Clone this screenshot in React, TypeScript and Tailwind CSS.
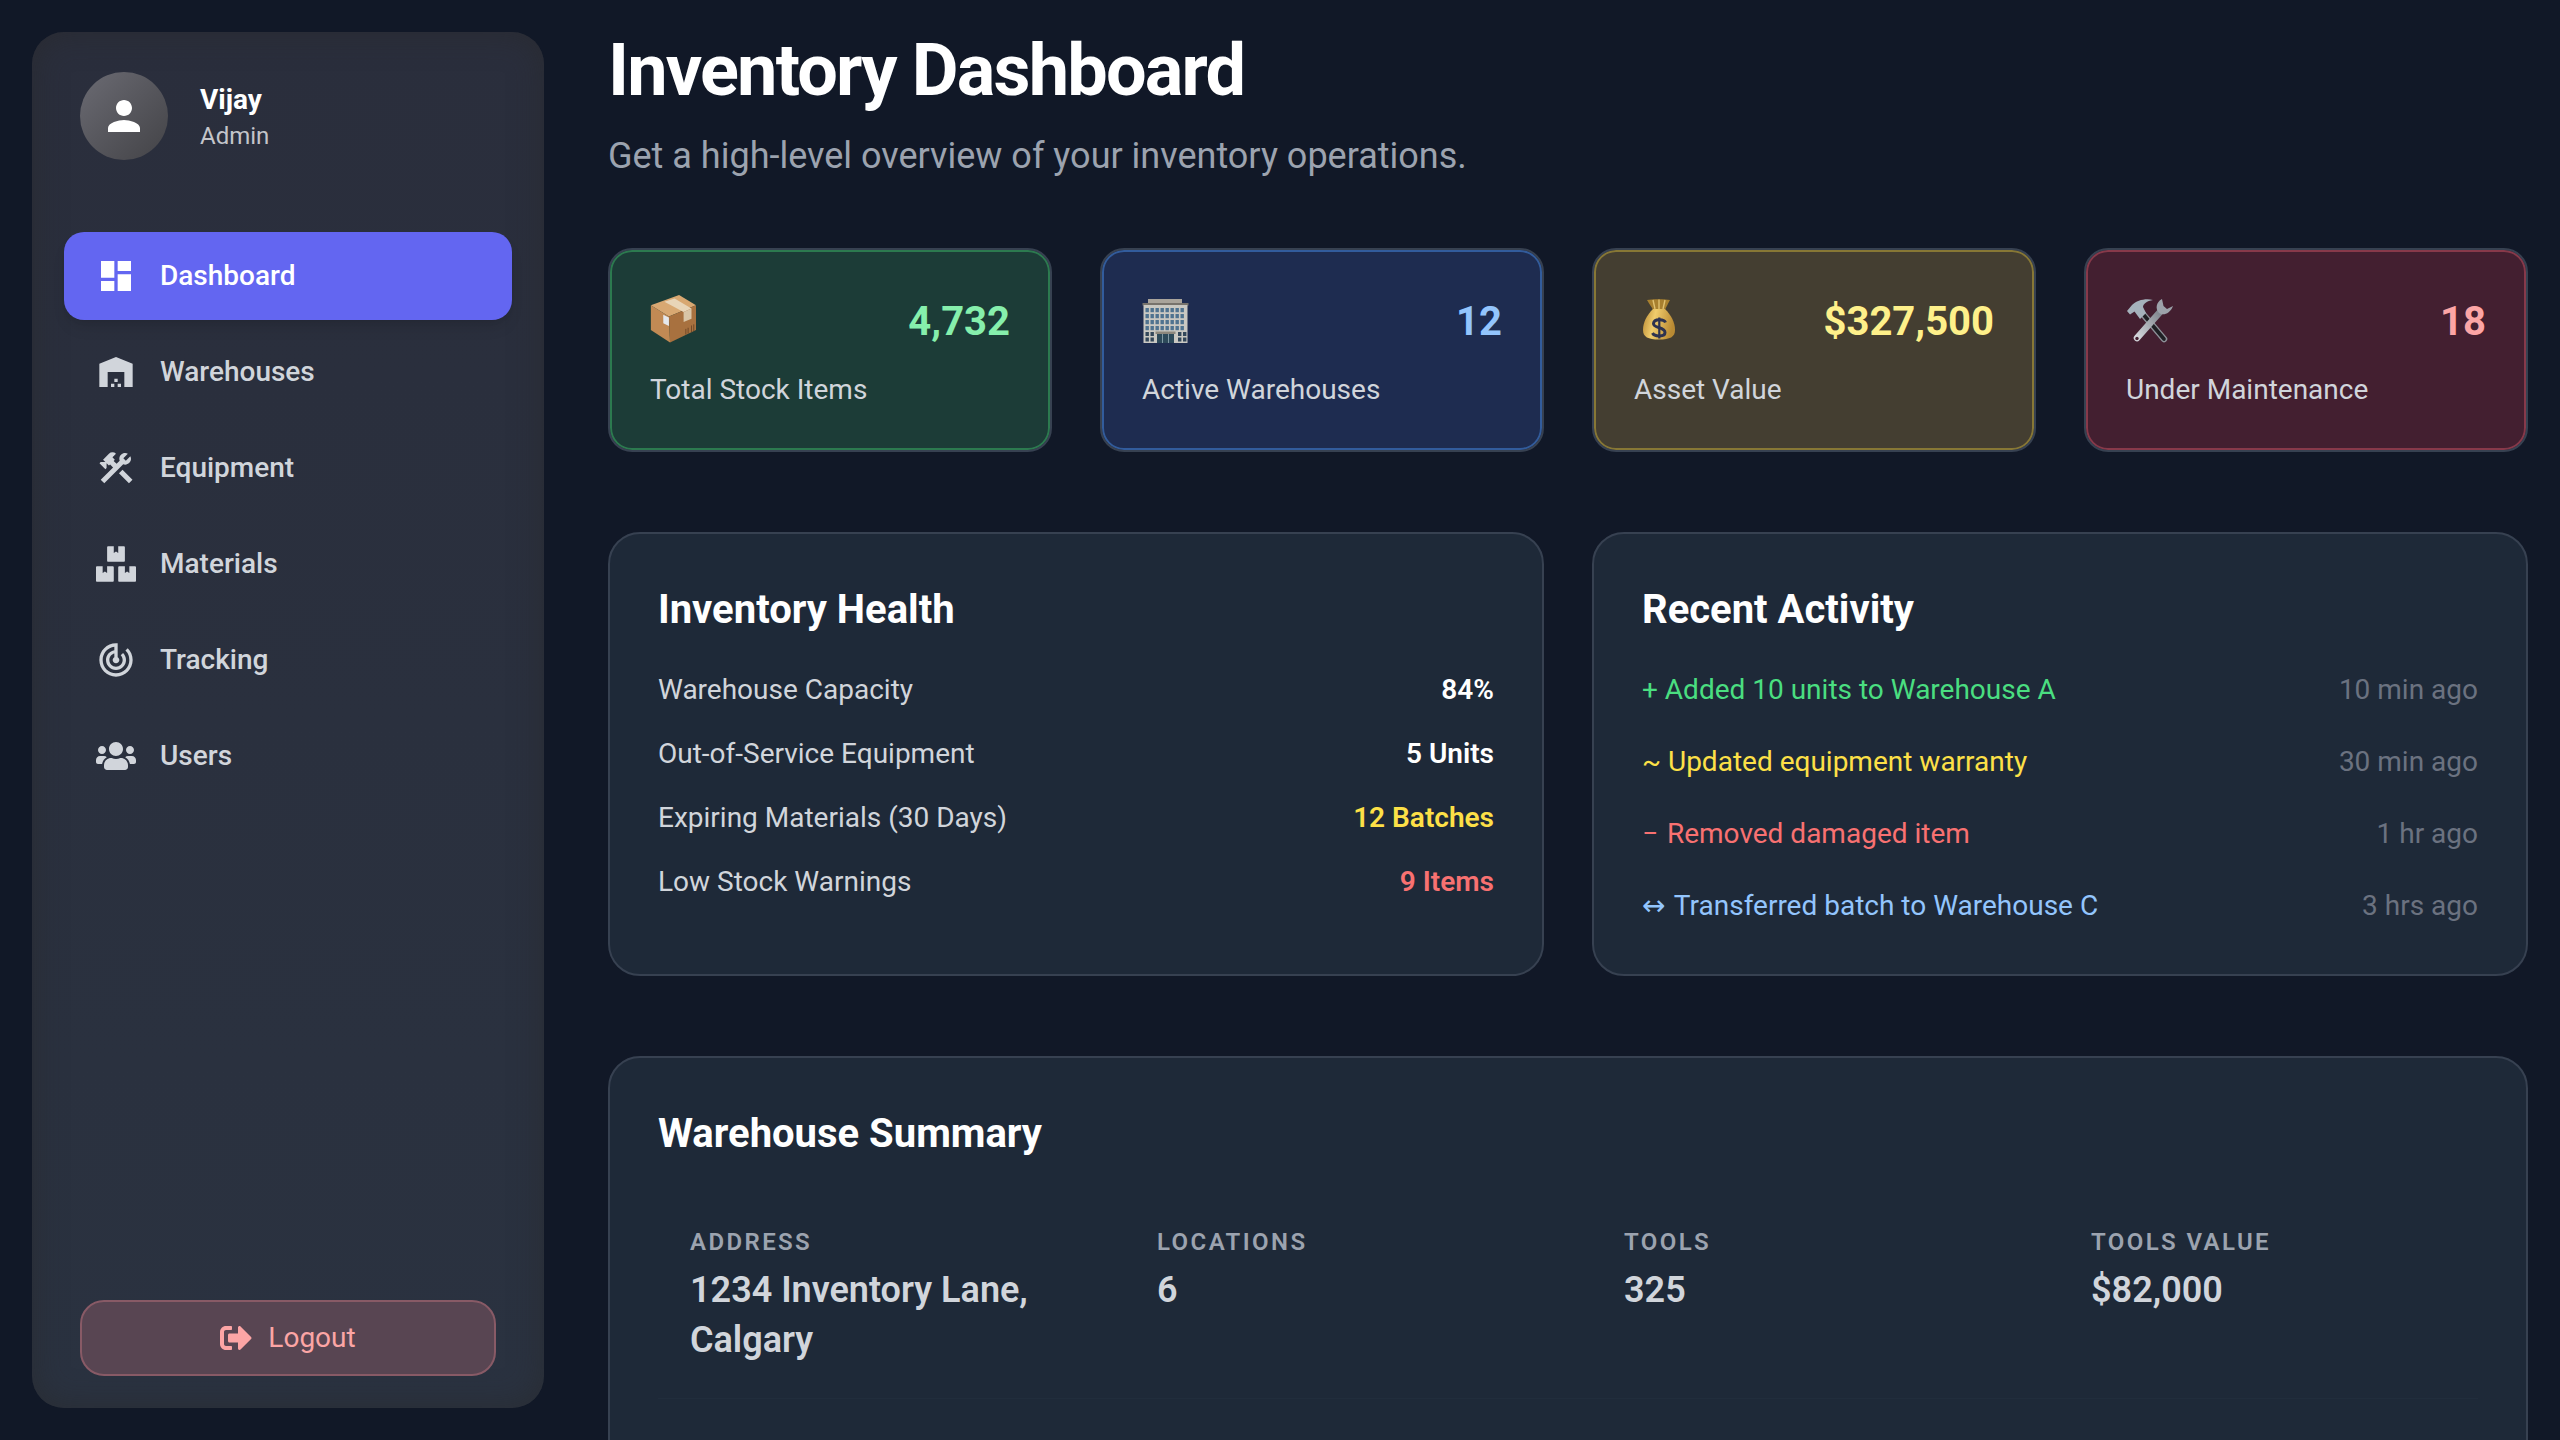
import React from 'react';
import { MdDashboard, MdWarehouse, MdConstruction, MdTrackChanges, MdPerson } from 'react-icons/md';
import { FaBoxes, FaUsers, FaSignOutAlt } from 'react-icons/fa';

const NAV_ITEMS = [
    { label: 'Dashboard', icon: MdDashboard, active: true },
    { label: 'Warehouses', icon: MdWarehouse },
    { label: 'Equipment', icon: MdConstruction },
    { label: 'Materials', icon: FaBoxes },
    { label: 'Tracking', icon: MdTrackChanges },
    { label: 'Users', icon: FaUsers },
];

// Emoji drawn by hand, there is no colour emoji font in the sandbox
const PackageEmoji = () => (
    <svg viewBox="12 11 41 42.5" className="w-12 h-12">
        <polygon points="12,20 37,11 52,20 28,30" fill="#d8a872" />
        <polygon points="12,20 28,30 29,53 12,42" fill="#c18a54" />
        <polygon points="28,30 52,20 52,42 29,53" fill="#a8713f" />
        <polygon points="24,17 33,14 48,23 41,26" fill="#e8d5b8" />
        <polygon points="41,26 48,23 48,32 41,35" fill="#d9c5a6" />
        <polygon points="23,28.5 28,31 28,38.5 23,36" fill="#e4e8ec" />
        <path d="M43 41 V46 M45 40 V45 M48 38 V44 M50 37 V43" stroke="#6b4526" strokeWidth="0.8" />
    </svg>
);

const BuildingEmoji = () => (
    <svg viewBox="7 9 48 48" className="w-12 h-12">
        <rect x="13" y="13" width="34" height="5" fill="#a9a49b" />
        <rect x="7.5" y="17" width="46" height="2.5" fill="#77736c" />
        <rect x="8.5" y="19" width="44" height="38" fill="#c9c8c2" />
        <g fill="#4f7390">
            {[22, 28, 34, 40].map((y) => (
                <g key={y}>
                    {[10.5, 15.5, 20.5, 25.5, 30.5, 35.5, 40.5, 45.5].map((x) => (
                        <rect key={x} x={x} y={y} width="3.4" height="4.2" />
                    ))}
                </g>
            ))}
        </g>
        <g fill="#33475a">
            {[46, 51.5].map((y) => (
                <g key={y}>
                    <rect x="10.5" y={y} width="3.4" height="4" />
                    <rect x="15.5" y={y} width="3.4" height="4" />
                    <rect x="43" y={y} width="3.4" height="4" />
                    <rect x="48" y={y} width="3.4" height="4" />
                </g>
            ))}
        </g>
        <rect x="20.5" y="45.5" width="20" height="2.5" fill="#8c877d" />
        <rect x="22" y="48" width="17" height="9" fill="#2d4a5a" />
        <path d="M27.5 48 V57 M33.5 48 V57" stroke="#8aa3ad" strokeWidth="0.9" />
    </svg>
);

const MoneyBagEmoji = () => (
    <svg viewBox="4 9 48 48" className="w-12 h-12">
        <defs>
            <linearGradient id="bagBody" x1="0" y1="0" x2="1" y2="0.2">
                <stop offset="0" stopColor="#b98a33" />
                <stop offset="0.4" stopColor="#f0cc6c" />
                <stop offset="1" stopColor="#b98a33" />
            </linearGradient>
        </defs>
        <path d="M17 14 C22 13 35 13 40 14 C38 18 36 21 35 24 L23 24 C22 21 19 18 17 14 Z" fill="#a8802f" />
        <path d="M23 14 L25 23 M29 13.5 V23 M35 14 L33 23" stroke="#e0c070" strokeWidth="1.4" />
        <path d="M23 23 C17 29 13 36 13 44 C13 51 18 53.5 29 53.5 C40 53.5 45 51 45 44 C45 36 41 29 35 23 Z" fill="url(#bagBody)" />
        <path d="M35.5 36.5 C34 33 24 32.5 23.5 37.5 C23 42.5 35 40.5 35 46.5 C35 51 24.5 51 22.5 47" fill="none" stroke="#2e3350" strokeWidth="3" />
        <path d="M29.3 31.5 V52.5" stroke="#2e3350" strokeWidth="2.2" />
    </svg>
);

const ToolsEmoji = () => (
    <svg viewBox="6 9 48 48" className="w-12 h-12">
        <defs>
            <linearGradient id="wrenchBody" x1="0" y1="1" x2="1" y2="0">
                <stop offset="0" stopColor="#d4d7dc" />
                <stop offset="1" stopColor="#7f858d" />
            </linearGradient>
        </defs>
        <path d="M22 27 L44 53" stroke="#8d9198" strokeWidth="6.5" strokeLinecap="round" />
        <path d="M23 28 L44 53" stroke="#1f2024" strokeWidth="3.6" strokeLinecap="round" />
        <path d="M17 52 L40 26" stroke="url(#wrenchBody)" strokeWidth="6.5" strokeLinecap="round" />
        <path d="M42 13 C36 16 35 23 39 27 C43 30 50 28 53 20 L47 23 L43.5 20 Z" fill="#9ca2aa" />
        <circle cx="17" cy="52.5" r="1.7" fill="#431f30" />
        <path d="M7 25 L12 19 C17 14 26 12 33 14 C27 15 23 18 23 21 L26 27 L20 33 L14.5 25.5 L10 28.5 Z" fill="#a5b2bc" />
    </svg>
);

const STAT_CARDS = [
    { label: 'Total Stock Items', value: '4,732', Emoji: PackageEmoji, card: 'bg-[#1c3c37] shadow-[inset_0_0_0_2px_#2c7a4f]', text: 'text-[#86efac]' },
    { label: 'Active Warehouses', value: '12', Emoji: BuildingEmoji, card: 'bg-[#1e2c50] shadow-[inset_0_0_0_2px_#325c9c]', text: 'text-[#93c5fd]' },
    { label: 'Asset Value', value: '$327,500', Emoji: MoneyBagEmoji, card: 'bg-[#443e31] shadow-[inset_0_0_0_2px_#877735]', text: 'text-[#fef08a]' },
    { label: 'Under Maintenance', value: '18', Emoji: ToolsEmoji, card: 'bg-[#431f30] shadow-[inset_0_0_0_2px_#87394a]', text: 'text-[#fca5a5]' },
];

const HEALTH_ROWS = [
    { label: 'Warehouse Capacity', value: '84%', color: 'text-white' },
    { label: 'Out-of-Service Equipment', value: '5 Units', color: 'text-white' },
    { label: 'Expiring Materials (30 Days)', value: '12 Batches', color: 'text-[#fde047]' },
    { label: 'Low Stock Warnings', value: '9 Items', color: 'text-[#f87171]' },
];

const ACTIVITY_ROWS = [
    { text: <>+ Added 10 units to Warehouse A</>, time: '10 min ago', color: 'text-[#4ade80]' },
    { text: <>~ Updated equipment warranty</>, time: '30 min ago', color: 'text-[#fde047]' },
    { text: <><span className="pr-[2px]">−</span> Removed damaged item</>, time: '1 hr ago', color: 'text-[#f87171]' },
    { text: <><span className="pr-[2px] font-['DejaVu_Sans']">↔</span> Transferred batch to Warehouse C</>, time: '3 hrs ago', color: 'text-[#93c5fd]' },
];

const SUMMARY_COLUMNS = [
    { label: 'Address', value: '1234 Inventory Lane, Calgary' },
    { label: 'Locations', value: '6' },
    { label: 'Tools', value: '325' },
    { label: 'Tools Value', value: '$82,000' },
];

const Sidebar = () => (
    <aside className="w-[512px] h-[1376px] shrink-0 flex flex-col rounded-[32px] bg-gradient-to-b from-[#2a2e3c] to-[#2a3240] shadow-[inset_0_0_32px_rgba(40,40,40,0.55)] px-8 pt-10 pb-8">
        <div className="flex items-center gap-8 px-4">
            <div className="w-[88px] h-[88px] rounded-full bg-gradient-to-br from-[#6b6b73] to-[#434347] flex items-center justify-center">
                <MdPerson className="text-white w-12 h-12" />
            </div>
            <div className="mt-[2px]">
                <p className="text-[28px] leading-[36px] font-bold text-white">Vijay</p>
                <p className="mt-0.5 text-[24px] leading-[32px] text-[#c3c5ca]">Admin</p>
            </div>
        </div>
        <nav className="mt-[72px] flex flex-col gap-2 flex-1">
            {NAV_ITEMS.map((item) => (
                <a
                    key={item.label}
                    className={`h-[88px] flex items-center gap-6 pl-8 rounded-[20px] text-[28px] font-medium ${item.active ? 'bg-[#6366f1] text-white shadow-lg' : 'text-[#d1d5db]'}`}
                >
                    <item.icon className="w-10 h-10 shrink-0" />
                    {item.label}
                </a>
            ))}
        </nav>
        <button className="mx-4 h-[76px] flex items-center justify-center gap-4 rounded-[24px] border-2 border-[#885a66] bg-[#584552] text-[#fca5a5] text-[28px]">
            <FaSignOutAlt className="w-8 h-8" />
            Logout
        </button>
    </aside>
);

const Panel = ({ title, children, className = '' }: { title: string; children: React.ReactNode; className?: string }) => (
    <section className={`rounded-[32px] border-2 border-[#374151] bg-[#1e2938] p-12 ${className}`}>
        <h2 className="mt-[4px] text-[40px] leading-[48px] font-bold text-white">{title}</h2>
        {children}
    </section>
);

export default function App() {
    return (
        <div className="h-screen overflow-hidden bg-[#111827] flex gap-16 p-8" style={{ fontFamily: 'Roboto, sans-serif' }}>
            <Sidebar />
            <main className="flex-1 min-w-0 -mt-8">
                <h1 className="text-[72px] leading-[80px] mt-[31px] font-bold text-white tracking-tight">Inventory Dashboard</h1>
                <p className="text-[36px] leading-[48px] mt-[21px] text-[#9ca3af]">Get a high-level overview of your inventory operations.</p>

                <div className="grid grid-cols-4 gap-12 mt-[68px]">
                    {STAT_CARDS.map(({ label, value, Emoji, card, text }) => (
                        <div key={label} className={`h-[204px] rounded-[24px] border-2 border-[#374151] px-10 pt-[45px] ${card}`}>
                            <div className="flex items-center justify-between h-[48px]">
                                <Emoji />
                                <span className={`pt-[6px] text-[40px] font-bold ${text}`}>{value}</span>
                            </div>
                            <p className="mt-[29px] text-[28px] leading-[36px] text-[#d1d5db]">{label}</p>
                        </div>
                    ))}
                </div>

                <div className="grid grid-cols-2 gap-12 mt-20">
                    <Panel title="Inventory Health" className="h-[444px]">
                        <div className="mt-6 flex flex-col">
                            {HEALTH_ROWS.map((row) => (
                                <div key={row.label} className="h-16 flex items-center justify-between text-[28px]">
                                    <span className="text-[#d1d5db]">{row.label}</span>
                                    <span className={`font-semibold ${row.color}`}>{row.value}</span>
                                </div>
                            ))}
                        </div>
                    </Panel>
                    <Panel title="Recent Activity" className="h-[444px]">
                        <div className="mt-[20px] flex flex-col">
                            {ACTIVITY_ROWS.map((row) => (
                                <div key={row.time} className="h-[72px] flex items-center justify-between text-[28px]">
                                    <span className={row.color}>{row.text}</span>
                                    <span className="text-[#6b7280]">{row.time}</span>
                                </div>
                            ))}
                        </div>
                    </Panel>
                </div>

                <Panel title="Warehouse Summary" className="mt-20 h-[600px]">
                    <div className="grid grid-cols-[repeat(4,403px)] gap-x-16 pl-8 pb-[33px] mt-[68px] border-b border-[#212d3c]">
                        {SUMMARY_COLUMNS.map((col) => (
                            <div key={col.label}>
                                <p className="text-[24px] leading-[32px] font-semibold uppercase tracking-widest text-[#9ca3af]">{col.label}</p>
                                <p className="mt-[7px] text-[36px] leading-[50px] font-semibold text-[#d1d5db]">{col.value}</p>
                            </div>
                        ))}
                    </div>
                </Panel>
            </main>
        </div>
    );
}
